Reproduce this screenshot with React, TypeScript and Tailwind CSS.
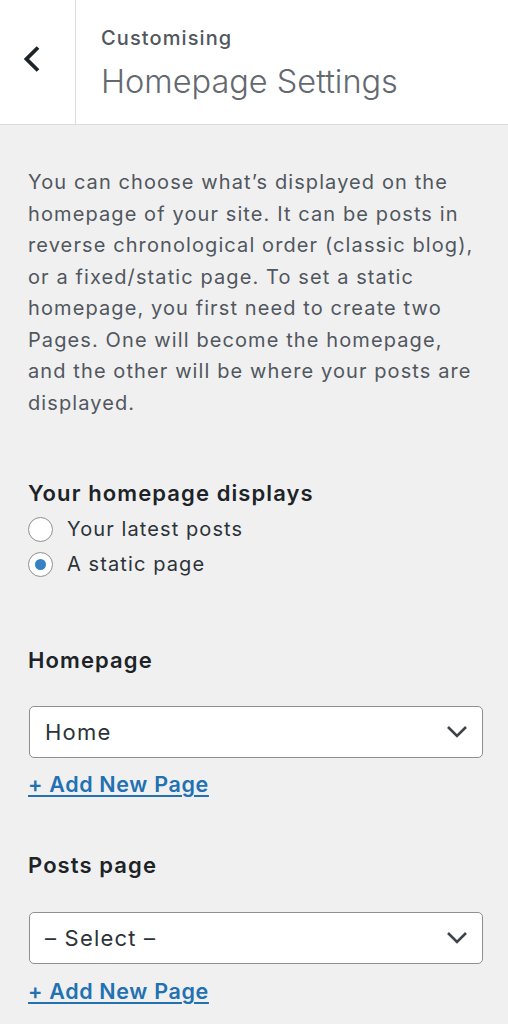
import React from "react";

const FONT = "font-['Inter','Liberation_Sans',sans-serif]";

function SelectBox({ value }: { value: string }) {
  return (
    <div className="ml-px w-[454px] h-[52px] bg-white border border-[#8c8f94] rounded-[5px] flex items-center justify-between pl-[15px] pr-[14px]">
      <span className="text-[22px] leading-[28px] tracking-[1.2px] text-[#2c3338]">{value}</span>
      <svg width="22" height="14" viewBox="0 0 22 14" fill="none">
        <polyline points="2,2 11,11 20,2" stroke="#3c434a" strokeWidth="2.6" />
      </svg>
    </div>
  );
}

function AddLink({ className }: { className: string }) {
  return (
    <a
      href="#"
      className={`${className} block w-fit text-[21.5px] leading-[28px] tracking-[0.65px] font-semibold text-[#2271b1] underline decoration-[1.5px] underline-offset-[3px]`}
    >
      + Add New Page
    </a>
  );
}

function Radio({ checked, label }: { checked?: boolean; label: string }) {
  return (
    <label className="h-[35px] flex items-center">
      <span className="w-[25px] h-[25px] rounded-full bg-white border border-[#8c8f94] flex items-center justify-center">
        {checked && <span className="w-[11px] h-[11px] rounded-full bg-[#3582c4]" />}
      </span>
      <span className="ml-[14px] text-[20px] leading-[35px] tracking-[1.1px] text-[#2c3338]">{label}</span>
    </label>
  );
}

export default function App() {
  return (
    <div className={`${FONT} w-[508px] min-h-[1024px] bg-[#f0f0f1]`}>
      {/* Header */}
      <div className="h-[125px] bg-white border-b border-[#dcdcde] flex">
        <button className="w-[76px] border-r border-[#dcdcde] flex items-center justify-center">
          <svg width="16" height="26" viewBox="0 0 16 26" fill="none" className="mr-[11px] mb-[7px]">
            <polyline points="14,1.5 2.5,13 14,24.5" stroke="#1d2327" strokeWidth="3.8" strokeLinejoin="miter" />
          </svg>
        </button>
        <div className="pl-[25px] pt-[26px]">
          <div className="text-[20px] leading-[24px] tracking-[1.1px] font-medium text-[#50575e]">Customising</div>
          <div className="mt-[12px] text-[32.5px] leading-[40px] font-light text-[#646970]">Homepage Settings</div>
        </div>
      </div>

      {/* Body */}
      <div className="px-[28px] pt-[42px] pb-[20px]">
        <p className="text-[20px] leading-[31.5px] tracking-[1.1px] text-[#50575e]">
          You can choose what’s displayed on the homepage of your site. It can be posts in reverse chronological order
          (classic blog), or a fixed/static page. To set a static homepage, you first need to create two Pages. One will
          become the homepage, and the other will be where your posts are displayed.
        </p>

        <div className="mt-[60px] text-[22px] leading-[28px] tracking-[1.1px] font-semibold text-[#1d2327]">
          Your homepage displays
        </div>
        <div className="mt-[5px]">
          <Radio label="Your latest posts" />
          <Radio checked label="A static page" />
        </div>

        <div className="mt-[64px] text-[22px] leading-[28px] tracking-[1.1px] font-semibold text-[#1d2327]">Homepage</div>
        <div className="mt-[32px]">
          <SelectBox value="Home" />
        </div>
        <AddLink className="mt-[12px]" />

        <div className="mt-[53px] text-[22px] leading-[28px] tracking-[1.1px] font-semibold text-[#1d2327]">Posts page</div>
        <div className="mt-[33px]">
          <SelectBox value="– Select –" />
        </div>
        <AddLink className="mt-[13px]" />
      </div>
    </div>
  );
}
